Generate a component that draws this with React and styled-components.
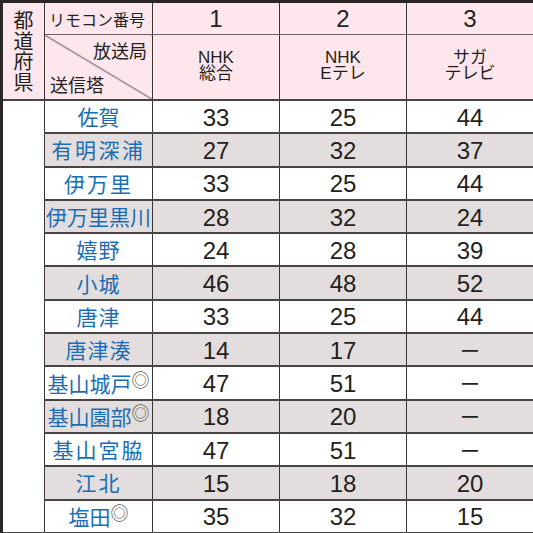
import React from 'react';
import styled, { createGlobalStyle } from 'styled-components';

const GlobalStyle = createGlobalStyle`
  html, body {
    margin: 0;
    padding: 0;
    background: #ffffff;
    overflow: hidden;
  }
  body {
    font-family: "Liberation Sans", "Noto Sans CJK JP", sans-serif;
  }
`;

const Page = styled.div`
  width: 533px;
  height: 533px;
  overflow: hidden;
`;

const Table = styled.table`
  border-collapse: collapse;
  table-layout: fixed;
  width: 534px;
  border-top: 3px solid #2b2626;
  border-left: 3px solid #2b2626;
`;

const Cell = styled.td`
  padding: 0;
  border-right: 1.5px solid #3a3535;
  border-bottom: 2px solid #4a4545;
  vertical-align: middle;
`;

const PrefHead = styled(Cell)`
  background: #fde7ec;
  text-align: center;
  font-family: "Noto Sans CJK JP", sans-serif;
  font-size: 20px;
  line-height: 20.5px;
  color: #231f20;
`;

const RemoteHead = styled(Cell)`
  background: #fde7ec;
  height: 31px;
  border-bottom: 1px solid #6a6464;
  font-family: "Noto Sans CJK JP", sans-serif;
  font-size: 16px;
  line-height: 1;
  color: #231f20;
  padding-left: 4px;
  white-space: nowrap;
`;

const ChannelNo = styled(Cell)`
  background: #fde7ec;
  border-bottom: 1px solid #6a6464;
  text-align: center;
  font-size: 24px;
  line-height: 1;
  color: #231f20;
`;

const DiagHead = styled(Cell)`
  height: 64px;
  background-color: #fde7ec;
  background-image: linear-gradient(
    to top right,
    transparent calc(50% - 0.8px),
    #3a3535 50%,
    transparent calc(50% + 0.8px)
  );
  font-family: "Noto Sans CJK JP", sans-serif;
  font-size: 18px;
  line-height: 20px;
  color: #231f20;
  padding: 0 5px 0 5px;
`;

const DiagTop = styled.div`
  text-align: right;
  margin-bottom: 14px;
`;

const DiagBottom = styled.div`
  text-align: left;
`;

const Broadcaster = styled(Cell)`
  background: #fde7ec;
  text-align: center;
  font-family: "Liberation Sans", "Noto Sans CJK JP", sans-serif;
  font-size: 17px;
  line-height: 16px;
  color: #231f20;
  padding-bottom: 2px;
`;

const PrefBody = styled(Cell)`
  background: #ffffff;
`;

const Station = styled(Cell)`
  height: 31.3px;
  background: ${p => (p.$shade ? '#e3dedd' : '#ffffff')};
  text-align: center;
  font-family: "Noto Sans CJK JP", sans-serif;
  font-size: 21px;
  line-height: 1;
  letter-spacing: ${p => p.$ls || 0}px;
  color: #1a6db5;
  white-space: nowrap;
  overflow: hidden;
`;

const Mark = styled.sup`
  font-size: 18px;
  line-height: 0;
  color: #5e5858;
  vertical-align: 5px;
  letter-spacing: 0;
`;

const Value = styled(Cell)`
  background: ${p => (p.$shade ? '#e3dedd' : '#ffffff')};
  text-align: center;
  font-size: 24px;
  line-height: 1;
  color: #231f20;
  padding-top: 2px;
`;

const Dash = styled.span`
  font-family: "Noto Sans CJK JP", sans-serif;
  font-size: 20px;
`;

const rows = [
  { name: '佐賀', v: [33, 25, 44] },
  { name: '有明深浦', ls: 2.5, v: [27, 32, 37] },
  { name: '伊万里', ls: 2, v: [33, 25, 44] },
  { name: '伊万里黒川', v: [28, 32, 24] },
  { name: '嬉野', ls: 1, v: [24, 28, 39] },
  { name: '小城', ls: 1, v: [46, 48, 52] },
  { name: '唐津', ls: 1, v: [33, 25, 44] },
  { name: '唐津湊', ls: 1, v: [14, 17, null] },
  { name: '基山城戸', mark: true, v: [47, 51, null] },
  { name: '基山園部', mark: true, v: [18, 20, null] },
  { name: '基山宮脇', ls: 2, v: [47, 51, null] },
  { name: '江北', ls: 2, v: [15, 18, 20] },
  { name: '塩田', mark: true, v: [35, 32, 15] },
];

const broadcasters = [
  ['NHK', '総合'],
  ['NHK', 'Eテレ'],
  ['サガ', 'テレビ'],
];

export default function App() {
  return (
    <Page>
      <GlobalStyle />
      <Table>
        <colgroup>
          <col style={{ width: 43 }} />
          <col style={{ width: 108 }} />
          <col style={{ width: 127 }} />
          <col style={{ width: 127 }} />
          <col style={{ width: 127 }} />
        </colgroup>
        <thead>
          <tr>
            <PrefHead rowSpan={2}>
              都<br />道<br />府<br />県
            </PrefHead>
            <RemoteHead>リモコン番号</RemoteHead>
            <ChannelNo>1</ChannelNo>
            <ChannelNo>2</ChannelNo>
            <ChannelNo>3</ChannelNo>
          </tr>
          <tr>
            <DiagHead>
              <DiagTop>放送局</DiagTop>
              <DiagBottom>送信塔</DiagBottom>
            </DiagHead>
            {broadcasters.map(([a, b]) => (
              <Broadcaster key={a + b}>
                {a}
                <br />
                {b}
              </Broadcaster>
            ))}
          </tr>
        </thead>
        <tbody>
          {rows.map((r, i) => (
            <tr key={r.name}>
              {i === 0 && <PrefBody rowSpan={rows.length} />}
              <Station $shade={i % 2 === 1} $ls={r.ls}>
                {r.name}
                {r.mark && <Mark>◎</Mark>}
              </Station>
              {r.v.map((n, j) => (
                <Value key={j} $shade={i % 2 === 1}>
                  {n === null ? <Dash>ー</Dash> : n}
                </Value>
              ))}
            </tr>
          ))}
        </tbody>
      </Table>
    </Page>
  );
}
